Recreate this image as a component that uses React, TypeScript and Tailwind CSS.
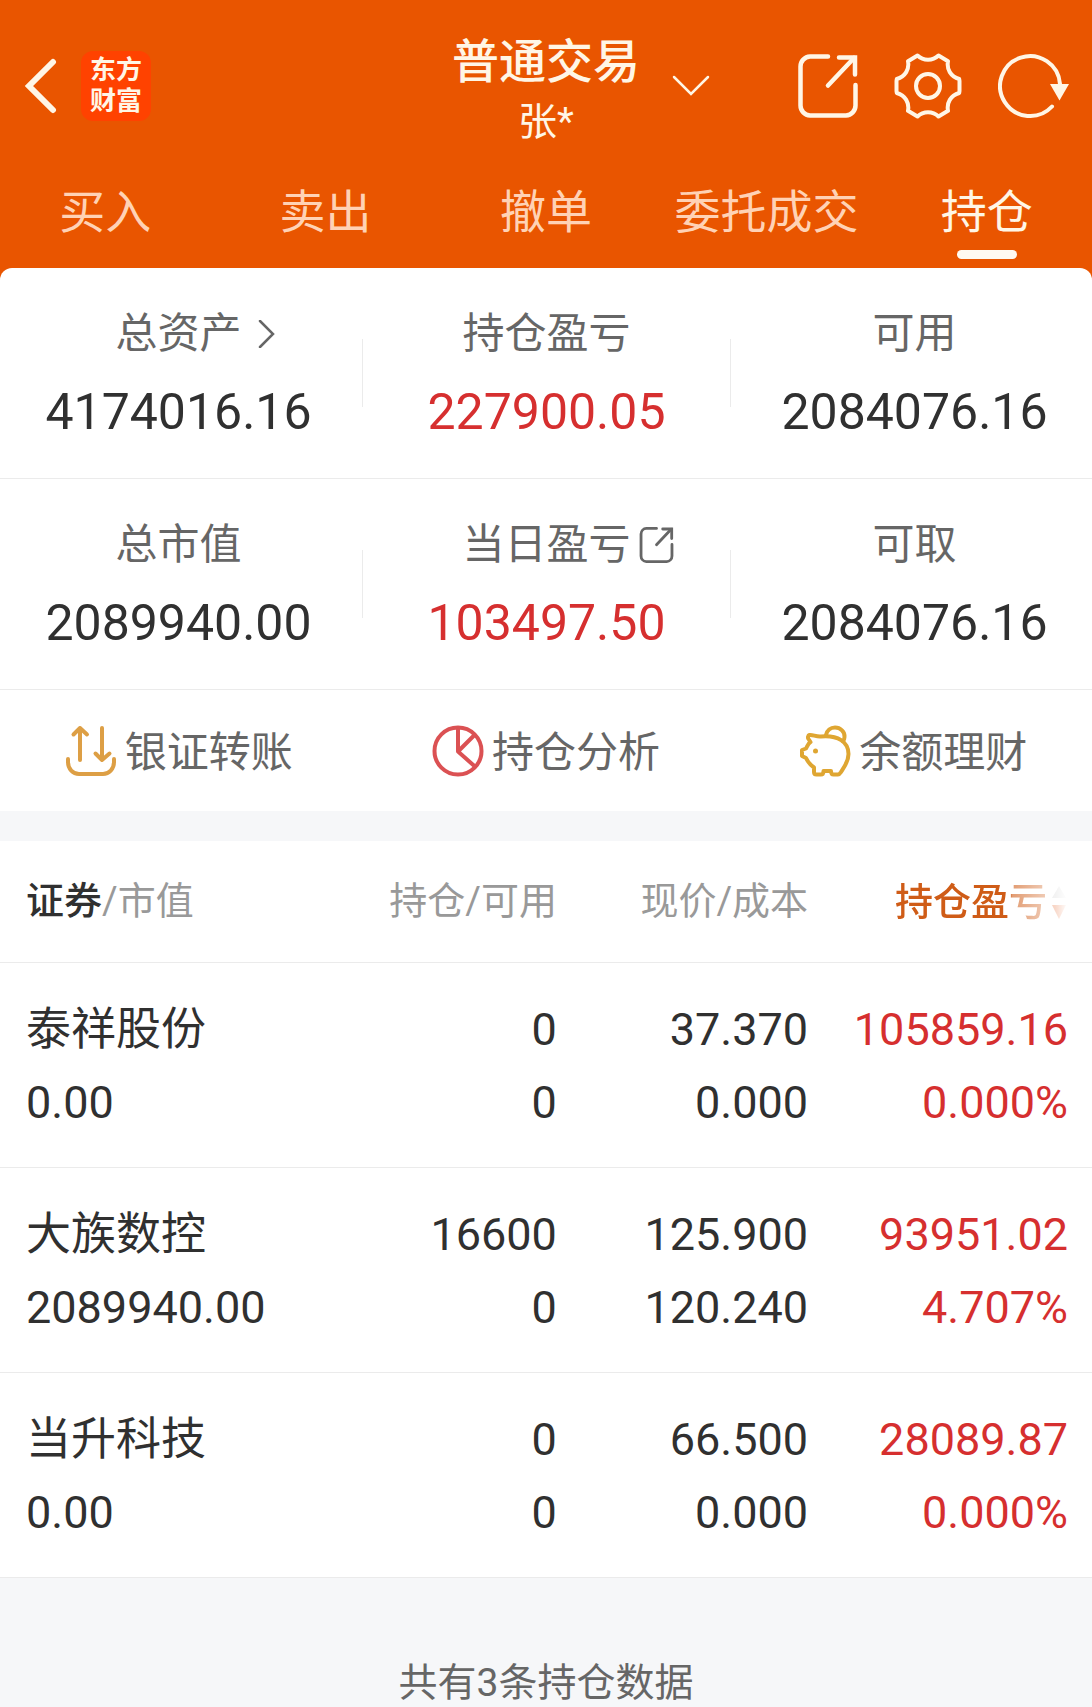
import React from 'react';

type Tone = 'dark' | 'red';

interface Stat {
  label: string;
  value: string;
  tone?: Tone;
  icon?: React.ReactNode;
}

interface Holding {
  name: string;
  marketValue: string;
  position: string;
  available: string;
  price: string;
  cost: string;
  profit: string;
  ratio: string;
}

/* ---------- Icons ---------- */

const BackIcon = () => (
  <svg width="34" height="56" viewBox="0 0 34 56" fill="none" stroke="currentColor" strokeWidth="6" strokeLinecap="round">
    <path d="M29 4 5 28l24 24" strokeLinejoin="miter" />
  </svg>
);

const CaretDownIcon = () => (
  <svg width="38" height="22" viewBox="0 0 38 22" fill="none" stroke="currentColor" strokeWidth="2.5" strokeLinecap="round">
    <path d="M2 2l17 17L36 2" />
  </svg>
);

const CaretRightIcon = () => (
  <svg width="18" height="28" viewBox="0 0 18 28" fill="none" stroke="currentColor" strokeWidth="2.5" strokeLinecap="round">
    <path d="M2 1l13 13L2 27" />
  </svg>
);

const ExportIcon = ({ width = 60, height = 64, stroke = 4.5 }: { width?: number; height?: number; stroke?: number }) => (
  <svg width={width} height={height} viewBox="0 0 60 64" fill="none" stroke="currentColor" strokeWidth={stroke} strokeLinecap="round">
    <path d="M30 2.500H12a10 10 0 0 0-9.500 10v39a10 10 0 0 0 9.500 10h36a10 10 0 0 0 9.500-10V31" />
    <path d="M30 31.500 56 4" />
    <path d="M41 3.500h16v17" strokeLinejoin="miter" />
  </svg>
);

const GearIcon = () => (
  <svg width="68" height="66" viewBox="0 0 68 66" fill="none" stroke="currentColor" strokeWidth="4" strokeLinejoin="round">
    <path d="M23.500 2.500 14 8.200c1.500 8-2.500 15.200-11.200 17.800L2.500 28v10l.3 2C11.500 42.600 15.500 49.800 14 57.800l9.500 5.700c5.800-5.600 15.200-5.600 21 0l9.500-5.700c-1.500-8 2.500-15.200 11.200-17.800l.3-2V28l-.3-2C56.500 23.400 52.500 16.200 54 8.200l-9.500-5.700c-5.800 5.600-15.200 5.600-21 0Z" />
    <circle cx="34" cy="33" r="12" />
  </svg>
);

const RefreshIcon = () => (
  <svg width="72" height="66" viewBox="0 0 72 66" fill="none" stroke="currentColor" strokeWidth="4" strokeLinecap="round">
    <path d="M54 53.500A30 30 0 1 1 62 31" />
    <path d="M52 31h19l-9.500 16.500Z" fill="currentColor" stroke="none" />
  </svg>
);

const TransferIcon = () => (
  <svg width="52" height="52" viewBox="0 0 52 52" fill="none" stroke="#dd9f45" strokeWidth="4" strokeLinecap="round" strokeLinejoin="round">
    <path d="M3 34v3c0 7 5 12 11 12h24c6 0 11-5 11-12v-3" />
    <path d="M15 35V3M8.500 9.500 15 3l7 6.500" />
    <path d="M37 3v32M30.500 28.500 37 35l7.500-6.500" />
  </svg>
);

const AnalysisIcon = () => (
  <svg width="52" height="52" viewBox="0 0 52 52" fill="none" stroke="#db5153" strokeWidth="4">
    <circle cx="26" cy="26" r="23.500" />
    <path d="M26 3v23.500L42.500 10M26 26.500 43.500 42" strokeLinejoin="round" />
  </svg>
);

const PiggyIcon = () => (
  <svg width="52" height="52" viewBox="0 0 52 52" fill="none" stroke="#dfa632" strokeWidth="4" strokeLinecap="round" strokeLinejoin="round">
    <path d="M22 11.500c-5 .5-8-2-11.500-1.500-1.500.5-2 2.500-1 4l2 3c-2.500 1.500-3 4-4.500 6.500L3 25v6l4 2c2 4.500 4.500 7 8 9.500V47c0 1.500 1 2.500 2.500 2.500H22c1.500 0 2.500-1 2.500-3.500H32c0 2.500 1 3.500 2.500 3.500H39c1.500 0 2-1 3-2.500 3-5 7.500-10 7.500-18C49.500 17 39 10 22 11.500Z" />
    <path d="M27 10c1-4.500 4.500-7.500 9-7.500 5.500 0 10 4.500 9.500 9.500 0 1.500-.5 3-1.500 4" />
    <circle cx="16.500" cy="26" r="2.500" fill="#dfa632" stroke="none" />
  </svg>
);

const SortIcon = () => (
  <svg width="17" height="38" viewBox="0 0 17 38" className="shrink-0">
    <path d="M8 3l7 12H1Z" fill="#cccccc" />
    <path d="M8 36l7-14H1Z" fill="#e2591a" />
  </svg>
);

/* ---------- Data ---------- */

const tabs = ['买入', '卖出', '撤单', '委托成交', '持仓'];

const assetStats: Stat[] = [
  { label: '总资产', value: '4174016.16', icon: <CaretRightIcon /> },
  { label: '持仓盈亏', value: '227900.05', tone: 'red' },
  { label: '可用', value: '2084076.16' },
];

const marketStats: Stat[] = [
  { label: '总市值', value: '2089940.00' },
  { label: '当日盈亏', value: '103497.50', tone: 'red', icon: <ExportIcon width={35} height={36} stroke={5} /> },
  { label: '可取', value: '2084076.16' },
];

const actions = [
  { label: '银证转账', icon: <TransferIcon /> },
  { label: '持仓分析', icon: <AnalysisIcon /> },
  { label: '余额理财', icon: <PiggyIcon /> },
];

const holdings: Holding[] = [
  { name: '泰祥股份', marketValue: '0.00', position: '0', available: '0', price: '37.370', cost: '0.000', profit: '105859.16', ratio: '0.000%' },
  { name: '大族数控', marketValue: '2089940.00', position: '16600', available: '0', price: '125.900', cost: '120.240', profit: '93951.02', ratio: '4.707%' },
  { name: '当升科技', marketValue: '0.00', position: '0', available: '0', price: '66.500', cost: '0.000', profit: '28089.87', ratio: '0.000%' },
];

/* ---------- Sections ---------- */

const Header = () => (
  <header className="overflow-hidden text-[#fff6e6]">
    <div className="grid grid-cols-[1fr_auto_1fr] items-center pt-[26px]">
      <div className="flex items-center pl-6">
        <button type="button" aria-label="返回">
          <BackIcon />
        </button>
        <div className="ml-[23px] flex size-[70px] flex-col items-center justify-center rounded-xl bg-[#ff4200] text-[26px] leading-[31px] font-bold">
          <span>东方</span>
          <span>财富</span>
        </div>
      </div>

      <div className="text-center">
        <h1 className="text-[47px] leading-[72px] font-medium">普通交易</h1>
        <p className="text-[39px] leading-[48px]">张*</p>
      </div>

      <div className="flex items-center pr-[22px] pl-8">
        <button type="button" aria-label="切换账户">
          <CaretDownIcon />
        </button>
        <div className="ml-auto flex items-center gap-9">
          <button type="button" aria-label="分享">
            <ExportIcon />
          </button>
          <button type="button" aria-label="设置">
            <GearIcon />
          </button>
          <button type="button" aria-label="刷新">
            <RefreshIcon />
          </button>
        </div>
      </div>
    </div>

    <nav className="-mx-[5px] mt-[38px] grid grid-cols-5 pb-[9px]">
      {tabs.map((tab) => {
        const active = tab === '持仓';
        return (
          <button key={tab} type="button" className={`flex flex-col items-center text-[46px] leading-14 ${active ? 'text-[#fff6e6]' : 'text-[#ffd2b5]'}`}>
            <span>{tab}</span>
            <span className={`mt-[10px] h-[9px] w-[60px] rounded-full ${active ? 'bg-[#fffaf2]' : 'bg-transparent'}`} />
          </button>
        );
      })}
    </nav>
  </header>
);

const StatRow = ({ stats, iconGap }: { stats: Stat[]; iconGap: string }) => (
  <div className="overflow-hidden border-b border-[#ebebeb]">
    <div className="-mr-1.5 -ml-[5px] flex items-center">
      {stats.map((stat, index) => (
        <React.Fragment key={stat.label}>
          {index > 0 && <div className="h-[68px] w-px bg-[#ebebeb]" />}
          <div className="flex-1 pt-[38px] pb-9">
            <div className="grid grid-cols-[1fr_auto_1fr] items-center text-[42px] leading-14 text-[#666666]">
              <span />
              <span>{stat.label}</span>
              <span className={iconGap}>{stat.icon}</span>
            </div>
            <div className={`mt-5 text-center text-[50px] leading-[60px] ${stat.tone === 'red' ? 'text-[#d62f2f]' : 'text-[#303030]'}`}>
              {stat.value}
            </div>
          </div>
        </React.Fragment>
      ))}
    </div>
  </div>
);

const Actions = () => (
  <div className="overflow-hidden">
    <div className="-mx-[5px] grid h-[121px] grid-cols-3">
      {actions.map((action) => (
        <button key={action.label} type="button" className="flex items-center justify-center gap-2 text-[42px] text-[#666666]">
          {action.icon}
          <span className="pt-1">{action.label}</span>
        </button>
      ))}
    </div>
  </div>
);

const HoldingsTable = () => (
  <table className="w-full table-fixed bg-white text-right text-[45px] leading-[73px] text-[#303030]">
    <thead>
      <tr className="h-[121px] border-b border-[#ebebeb] text-[38px] text-[#999999]">
        <th className="w-[28%] pl-[26px] text-left font-normal whitespace-nowrap">
          <span className="font-medium text-[#303030]">证券</span>/市值
        </th>
        <th className="w-[23%] font-normal whitespace-nowrap">持仓/可用</th>
        <th className="w-[23%] font-normal whitespace-nowrap">现价/成本</th>
        <th className="pr-6 font-normal whitespace-nowrap">
          <button type="button" className="inline-flex items-center gap-1 align-middle font-medium text-[#cf5c17] [mask-image:linear-gradient(to_right,black_66%,rgba(0,0,0,0.6)_68%,rgba(0,0,0,0.25)_92%,transparent)]">
            持仓盈亏
            <SortIcon />
          </button>
        </th>
      </tr>
    </thead>
    <tbody>
      {holdings.map((row) => (
        <tr key={row.name} className="border-b border-[#ebebeb]">
          <td className="pt-[30px] pb-7 pl-[26px] text-left">
            <div>{row.name}</div>
            <div>{row.marketValue}</div>
          </td>
          <td className="pt-[30px] pb-7">
            <div>{row.position}</div>
            <div>{row.available}</div>
          </td>
          <td className="pt-[30px] pb-7">
            <div>{row.price}</div>
            <div>{row.cost}</div>
          </td>
          <td className="pt-[30px] pr-6 pb-7 text-[#d62f2f]">
            <div>{row.profit}</div>
            <div>{row.ratio}</div>
          </td>
        </tr>
      ))}
    </tbody>
  </table>
);

const App: React.FC = () => {
  return (
    <div className="flex min-h-screen flex-col bg-[#f6f7f9] font-[Roboto,'Noto_Sans_CJK_SC',sans-serif]">
      <div className="bg-[#e95500]">
        <Header />
        <section className="rounded-t-xl bg-white">
          <StatRow stats={assetStats} iconGap="pl-4" />
          <StatRow stats={marketStats} iconGap="pl-2" />
          <Actions />
        </section>
      </div>

      <main className="mt-[30px]">
        <HoldingsTable />
      </main>

      <p className="pt-20 text-center text-[39px] leading-[50px] text-[#666666]">共有3条持仓数据</p>
    </div>
  );
};

export default App;
